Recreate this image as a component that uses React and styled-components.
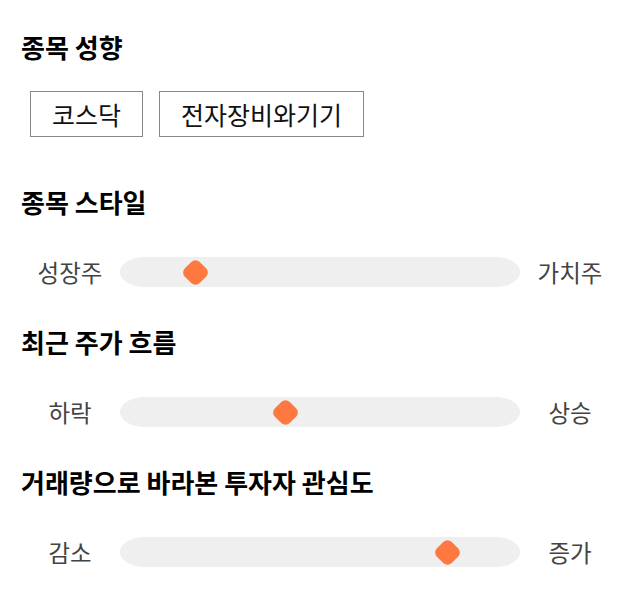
import React from "react";
import styled, { createGlobalStyle } from "styled-components";

const GlobalStyle = createGlobalStyle`
  body {
    margin: 0;
    background: #fff;
    font-family: "Noto Sans CJK KR", "Noto Sans", sans-serif;
    color: #000;
  }
`;

const Page = styled.div`
  width: 640px;
  padding: 20px 20px 0 20px;
  box-sizing: border-box;
`;

const Section = styled.section`
  margin-bottom: ${(p) => p.$gap || 0}px;
`;

const Title = styled.h2`
  margin: 0;
  font-size: 26px;
  font-weight: 700;
  line-height: 54px;
  height: 54px;
  padding-left: 1px;
`;

const Tags = styled.div`
  display: flex;
  gap: 16px;
  padding: 17px 0 0 10px;
`;

const Tag = styled.div`
  border: 1px solid #888;
  height: 46px;
  box-sizing: border-box;
  padding: 0 21px;
  display: flex;
  align-items: center;
  font-size: 25px;
  color: #111;
`;

const SliderRow = styled.div`
  display: grid;
  grid-template-columns: 100px 400px 100px;
  align-items: center;
  height: 30px;
  margin-top: ${(p) => p.$top}px;
`;

const Label = styled.span`
  text-align: center;
  font-size: 23.5px;
  color: #444;
`;

const Track = styled.div`
  position: relative;
  height: 30px;
  background: #efefef;
  border-radius: 24px / 15px;
`;

const Thumb = styled.div`
  position: absolute;
  top: 50%;
  width: 21px;
  height: 21px;
  margin: -10.5px 0 0 -10.5px;
  background: #ff7840;
  border-radius: 6px;
  transform: rotate(45deg);
`;

const sliders = [
  { title: "종목 스타일", left: "성장주", right: "가치주", pos: 18.75 },
  { title: "최근 주가 흐름", left: "하락", right: "상승", pos: 41.25 },
  { title: "거래량으로 바라본 투자자 관심도", left: "감소", right: "증가", pos: 81.75 },
];

export default function App() {
  return (
    <Page>
      <GlobalStyle />
      <Section $gap={38}>
        <Title>종목 성향</Title>
        <Tags>
          <Tag>코스닥</Tag>
          <Tag>전자장비와기기</Tag>
        </Tags>
      </Section>
      {sliders.map((s) => (
        <Section key={s.title} $gap={30}>
          <Title>{s.title}</Title>
          <SliderRow $top={26}>
            <Label>{s.left}</Label>
            <Track>
              <Thumb style={{ left: `${s.pos}%` }} />
            </Track>
            <Label>{s.right}</Label>
          </SliderRow>
        </Section>
      ))}
    </Page>
  );
}
